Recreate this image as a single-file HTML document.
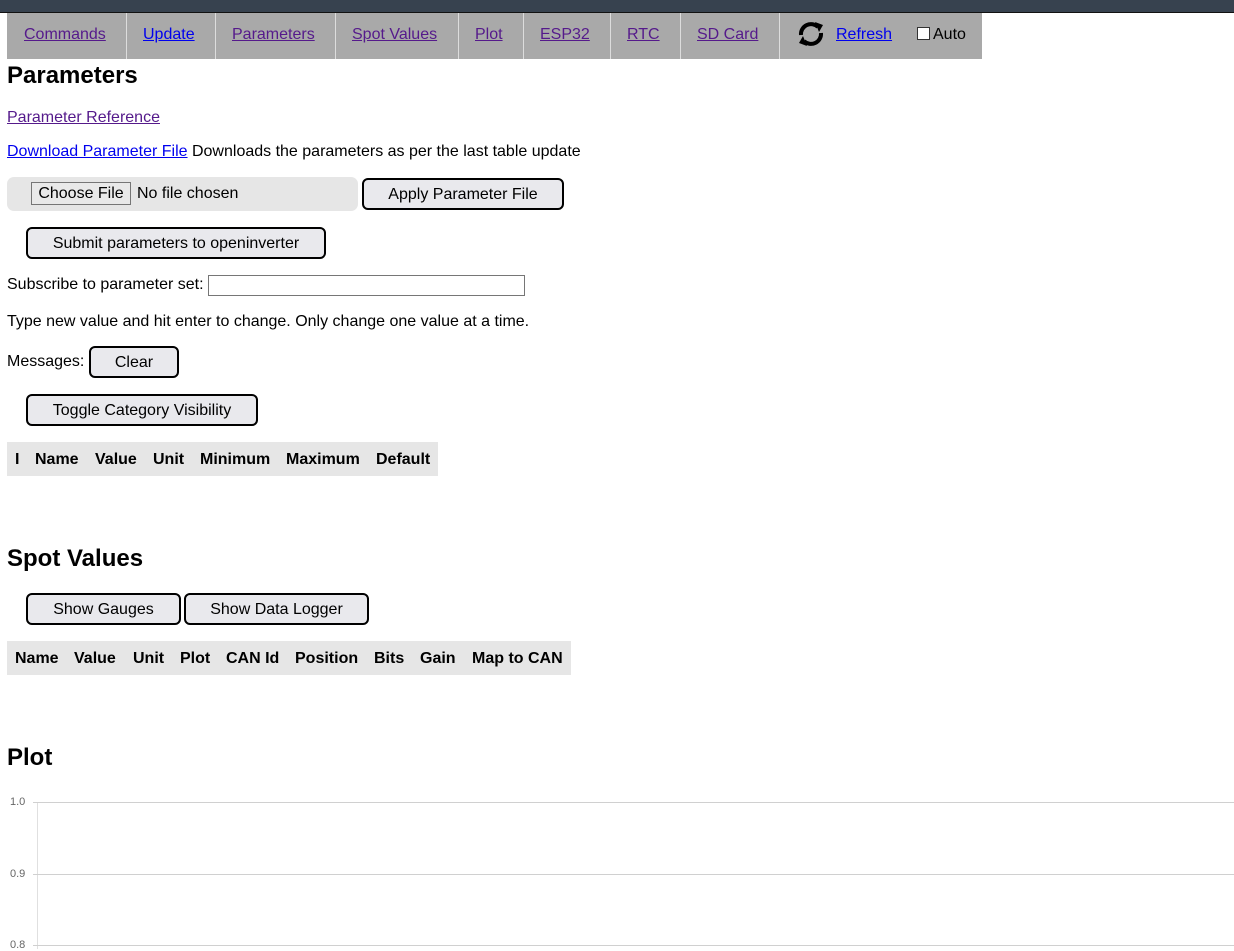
<!DOCTYPE html>
<html><head><meta charset="utf-8"><style>
body{margin:0;width:1234px;height:949px;overflow:hidden;background:#fff;font-family:"Liberation Sans",Arial,sans-serif;font-size:16px;color:#000;position:relative}
.a{position:absolute;white-space:nowrap}
a{color:#551a8b;text-decoration:underline}
a.b{color:#0000ee}
.nav{position:absolute;left:7px;top:13px;width:975px;height:46px;background:#a9a9a9}
.sep{position:absolute;top:13px;width:1px;height:46px;background:#ddd}
h2{margin:0;font-size:24px;font-weight:bold;position:absolute}
.btn{position:absolute;border:2px solid #000;border-radius:6px;background:#e9e9ed;box-sizing:border-box;text-align:center;font-size:16px;line-height:29px}
.th{position:absolute;background:#e6e6e6;font-weight:bold;height:34px;line-height:35px}
.th span{position:absolute}
.grid{position:absolute;left:33px;height:1px;background:#d0d0d0;width:1201px}
.yl{position:absolute;left:10px;font-size:11px;color:#666}
</style></head><body>
<div class="a" style="left:0;top:0;width:1234px;height:12px;background:#37424f;border-bottom:1px solid #111"></div>
<div class="nav"></div>
<div class="sep" style="left:126px"></div><div class="sep" style="left:215px"></div><div class="sep" style="left:335px"></div><div class="sep" style="left:458px"></div><div class="sep" style="left:523px"></div><div class="sep" style="left:610px"></div><div class="sep" style="left:680px"></div><div class="sep" style="left:779px"></div>
<a class="a" style="left:24px;top:26px">Commands</a>
<a class="a b" style="left:143px;top:26px">Update</a>
<a class="a" style="left:232px;top:26px">Parameters</a>
<a class="a" style="left:352px;top:26px">Spot Values</a>
<a class="a" style="left:475px;top:26px">Plot</a>
<a class="a" style="left:540px;top:26px">ESP32</a>
<a class="a" style="left:627px;top:26px">RTC</a>
<a class="a" style="left:697px;top:26px">SD Card</a>
<svg class="a" style="left:796px;top:21px" width="30" height="26" viewBox="0 0 30 26"><path d="M5 14 A10 10 0 0 1 22 6" fill="none" stroke="#000" stroke-width="4"/><path d="M19 1 L27 4 L23 11 Z" fill="#000"/><path d="M25 12 A10 10 0 0 1 8 20" fill="none" stroke="#000" stroke-width="4"/><path d="M11 25 L3 22 L7 15 Z" fill="#000"/></svg>
<a class="a b" style="left:836px;top:26px">Refresh</a>
<div class="a" style="left:917px;top:27px;width:11px;height:11px;border:1px solid #333;background:#fff"></div>
<div class="a" style="left:933px;top:26px">Auto</div>

<h2 style="left:7px;top:62px">Parameters</h2>
<a class="a" style="left:7px;top:109px">Parameter Reference</a>
<div class="a" style="left:7px;top:143px"><a class="b">Download Parameter File</a> Downloads the parameters as per the last table update</div>
<div class="a" style="left:7px;top:177px;width:351px;height:34px;background:#e6e6e6;border-radius:7px"></div>
<div class="a" style="left:31px;top:182px;width:100px;height:23px;border:1px solid #767676;background:#e9e9e9;box-sizing:border-box;text-align:center;line-height:22px">Choose File</div>
<div class="a" style="left:137px;top:185px">No file chosen</div>
<div class="btn" style="left:362px;top:178px;width:202px;height:32px">Apply Parameter File</div>
<div class="btn" style="left:26px;top:227px;width:300px;height:32px">Submit parameters to openinverter</div>
<div class="a" style="left:7px;top:276px">Subscribe to parameter set:</div>
<div class="a" style="left:208px;top:275px;width:317px;height:21px;border:1px solid #767676;box-sizing:border-box"></div>
<div class="a" style="left:7px;top:313px">Type new value and hit enter to change. Only change one value at a time.</div>
<div class="a" style="left:7px;top:353px">Messages:</div>
<div class="btn" style="left:89px;top:346px;width:90px;height:32px">Clear</div>
<div class="btn" style="left:26px;top:394px;width:232px;height:32px">Toggle Category Visibility</div>
<div class="th" style="left:7px;top:442px;width:431px"><span style="left:8px">I</span><span style="left:28px">Name</span><span style="left:88px">Value</span><span style="left:146px">Unit</span><span style="left:193px">Minimum</span><span style="left:279px">Maximum</span><span style="left:369px">Default</span></div>

<h2 style="left:7px;top:545px">Spot Values</h2>
<div class="btn" style="left:26px;top:593px;width:155px;height:32px">Show Gauges</div>
<div class="btn" style="left:184px;top:593px;width:185px;height:32px">Show Data Logger</div>
<div class="th" style="left:7px;top:641px;width:564px"><span style="left:8px">Name</span><span style="left:67px">Value</span><span style="left:126px">Unit</span><span style="left:173px">Plot</span><span style="left:219px">CAN Id</span><span style="left:288px">Position</span><span style="left:367px">Bits</span><span style="left:413px">Gain</span><span style="left:465px">Map to CAN</span></div>

<h2 style="left:7px;top:744px">Plot</h2>
<div class="a" style="left:37px;top:802px;width:1px;height:147px;background:#e0e0e0"></div>
<div class="grid" style="top:802px"></div>
<div class="grid" style="top:874px"></div>
<div class="grid" style="top:945px"></div>
<div class="yl" style="top:796px">1.0</div>
<div class="yl" style="top:868px">0.9</div>
<div class="yl" style="top:939px">0.8</div>
</body></html>
